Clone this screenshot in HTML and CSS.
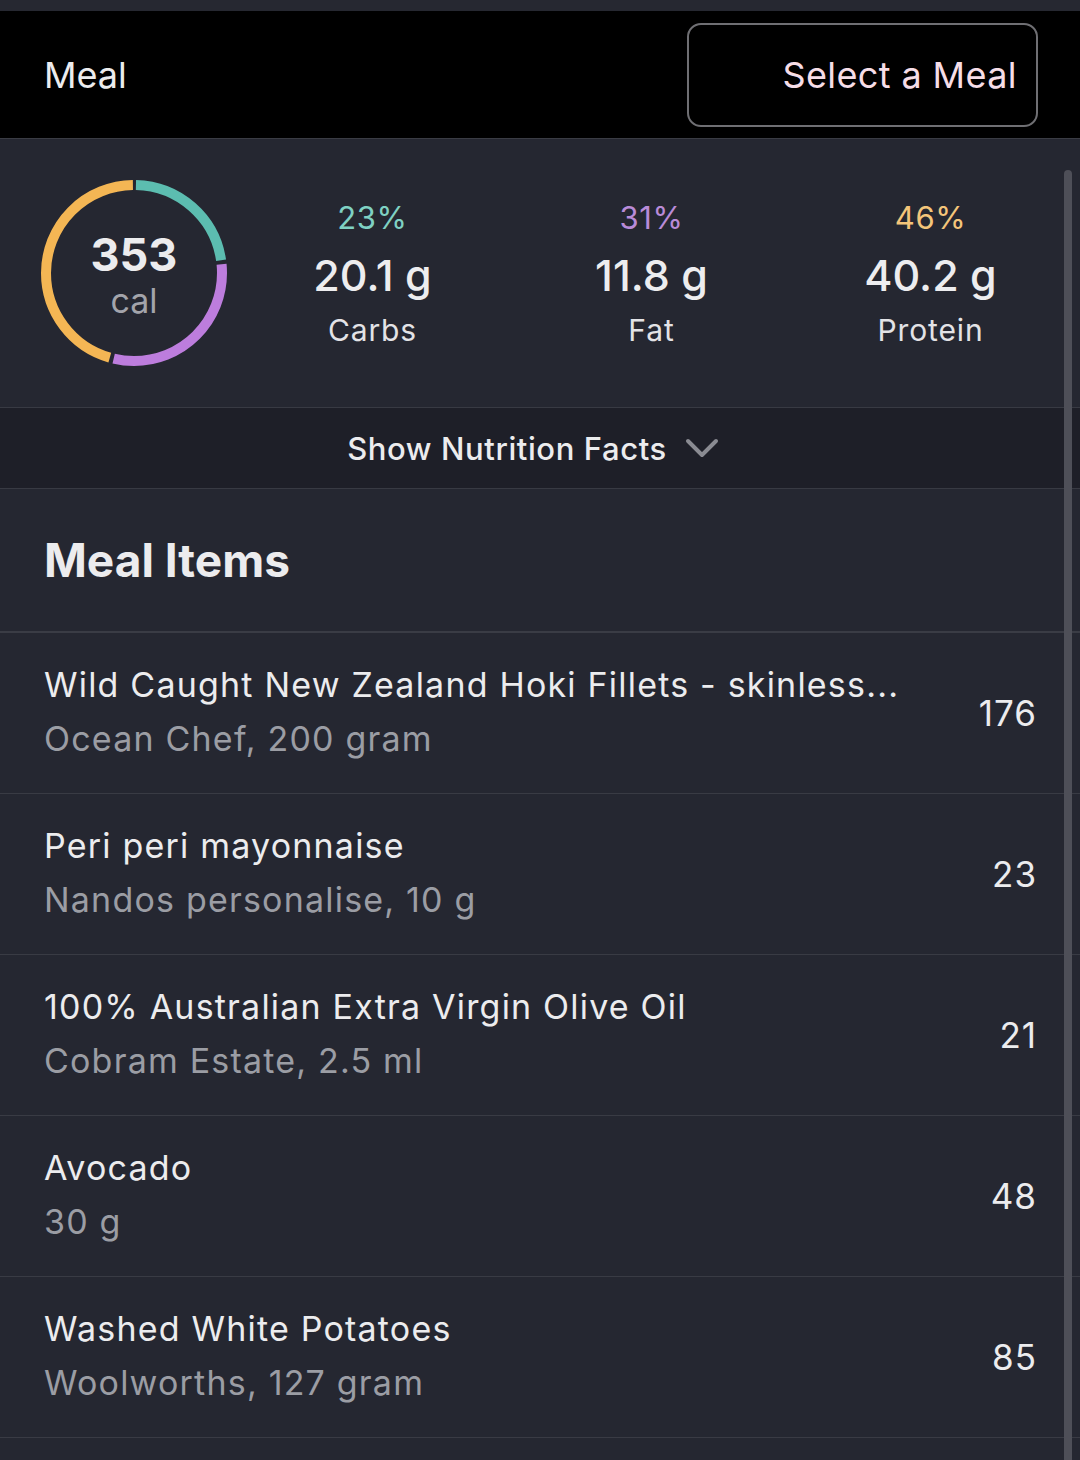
FILE: index.html
```html
<!DOCTYPE html>
<html>
<head>
<meta charset="utf-8">
<link rel="stylesheet" href="styles.css">
</head>
<body>
<div class="page">
  <div class="topstrip"></div>
  <header class="header">
    <div class="header-title">Meal</div>
    <button class="select-btn">Select a Meal</button>
  </header>
  <section class="summary">
    <div class="ring">
      <svg width="190" height="190" viewBox="0 0 190 190">
        <g transform="rotate(-90 95 95)" fill="none" stroke-width="10">
          <circle cx="95" cy="95" r="88" stroke="#5cbdb0" stroke-dasharray="123.2 600" stroke-dashoffset="-2"/>
          <circle cx="95" cy="95" r="88" stroke="#bd7ddd" stroke-dasharray="167.4 600" stroke-dashoffset="-129.2"/>
          <circle cx="95" cy="95" r="88" stroke="#f4b654" stroke-dasharray="250.3 600" stroke-dashoffset="-300.6"/>
        </g>
      </svg>
      <div class="ring-text">
        <div class="ring-num">353</div>
        <div class="ring-unit">cal</div>
      </div>
    </div>
    <div class="macros">
      <div class="macro">
        <div class="pct pct-carbs">23%</div>
        <div class="amount">20.1 g</div>
        <div class="label">Carbs</div>
      </div>
      <div class="macro">
        <div class="pct pct-fat">31%</div>
        <div class="amount">11.8 g</div>
        <div class="label">Fat</div>
      </div>
      <div class="macro">
        <div class="pct pct-protein">46%</div>
        <div class="amount">40.2 g</div>
        <div class="label">Protein</div>
      </div>
    </div>
  </section>
  <div class="facts-bar">
    <span class="facts-text">Show Nutrition Facts</span>
    <svg class="chevron" width="34" height="24" viewBox="0 0 34 24">
      <path d="M3 4 L17 18 L31 4" fill="none" stroke="#8a8b92" stroke-width="4" stroke-linecap="round" stroke-linejoin="round"/>
    </svg>
  </div>
  <div class="items-head">Meal Items</div>
  <ul class="items">
    <li class="item">
      <div class="item-text">
        <div class="item-name">Wild Caught New Zealand Hoki Fillets - skinless...</div>
        <div class="item-sub">Ocean Chef, 200 gram</div>
      </div>
      <div class="item-cal">176</div>
    </li>
    <li class="item">
      <div class="item-text">
        <div class="item-name">Peri peri mayonnaise</div>
        <div class="item-sub">Nandos personalise, 10 g</div>
      </div>
      <div class="item-cal">23</div>
    </li>
    <li class="item">
      <div class="item-text">
        <div class="item-name">100% Australian Extra Virgin Olive Oil</div>
        <div class="item-sub">Cobram Estate, 2.5 ml</div>
      </div>
      <div class="item-cal">21</div>
    </li>
    <li class="item">
      <div class="item-text">
        <div class="item-name">Avocado</div>
        <div class="item-sub">30 g</div>
      </div>
      <div class="item-cal">48</div>
    </li>
    <li class="item">
      <div class="item-text">
        <div class="item-name">Washed White Potatoes</div>
        <div class="item-sub">Woolworths, 127 gram</div>
      </div>
      <div class="item-cal">85</div>
    </li>
    <li class="item item-empty"></li>
  </ul>
  <div class="scrollbar"></div>
</div>
</body>
</html>
```
FILE: styles.css
```css
html, body {
  margin: 0;
  padding: 0;
  background: #252731;
}
body {
  font-family: Inter, "Noto Sans", "Liberation Sans", sans-serif;
  color: #ececee;
}
.page {
  position: relative;
  width: 1080px;
  height: 1460px;
  overflow: hidden;
  background: #252731;
}
.topstrip {
  height: 11px;
  background: #262831;
}
.header {
  height: 127px;
  background: #000;
  border-bottom: 1px solid #3a3c44;
  display: flex;
  align-items: center;
  justify-content: space-between;
  padding: 0 42px 0 44px;
}
.header-title {
  font-size: 36px;
  color: #ececee;
}
.select-btn {
  width: 351px;
  height: 104px;
  background: #000;
  border: 2px solid #6f6f73;
  border-radius: 14px;
  color: #f6dde7;
  font-family: inherit;
  font-size: 36px;
  text-align: right;
  padding: 0 19px 0 0;
  letter-spacing: 0.4px;
}
.summary {
  height: 268px;
  display: flex;
  align-items: center;
  padding-left: 39px;
  border-bottom: 1px solid #383a43;
}
.ring {
  position: relative;
  width: 190px;
  height: 190px;
}
.ring svg {
  display: block;
}
.ring-text {
  position: absolute;
  inset: 0;
  display: flex;
  flex-direction: column;
  align-items: center;
  justify-content: center;
  padding-top: 6px;
}
.ring-num {
  font-size: 45px;
  font-weight: 700;
  line-height: 50px;
  color: #ececee;
}
.ring-unit {
  font-size: 34px;
  line-height: 42px;
  color: #a3a4ab;
}
.macros {
  flex: 1;
  display: grid;
  grid-template-columns: 279px 279px 279px;
  padding-left: 4px;
}
.macro {
  display: flex;
  flex-direction: column;
  align-items: center;
}
.pct {
  font-size: 31px;
  line-height: 40px;
  letter-spacing: 0.6px;
}
.pct-carbs { color: #7fd1c3; }
.pct-fat { color: #b98bd8; }
.pct-protein { color: #f4c57a; }
.amount {
  font-size: 43px;
  line-height: 74px;
  font-weight: 500;
  color: #ededef;
}
.label {
  font-size: 30px;
  line-height: 36px;
  letter-spacing: 0.9px;
  color: #e3e3e6;
}
.facts-bar {
  height: 80px;
  background: #1e1f28;
  border-bottom: 1px solid #383a43;
  display: flex;
  align-items: center;
  justify-content: center;
  gap: 18px;
  padding-right: 14px;
}
.facts-text {
  font-size: 31px;
  font-weight: 500;
  letter-spacing: 0.6px;
  color: #ececee;
}
.chevron {
  display: block;
  margin-top: 2px;
}
.items-head {
  height: 144px;
  display: flex;
  align-items: center;
  padding-left: 44px;
  font-size: 46px;
  font-weight: 700;
  color: #ececee;
  border-bottom: 2px solid #3a3c45;
  box-sizing: border-box;
}
.items {
  list-style: none;
  margin: 0;
  padding: 0;
}
.item {
  display: flex;
  align-items: center;
  gap: 60px;
  height: 161px;
  box-sizing: border-box;
  padding: 0 44px;
  border-bottom: 1px solid #393b44;
}
.item-text {
  flex: 1;
  min-width: 0;
  margin-top: -3px;
}
.item-name, .item-sub {
  font-size: 34px;
  line-height: 54px;
  letter-spacing: 1.2px;
  white-space: nowrap;
  overflow: hidden;
  text-overflow: ellipsis;
}
.item-name {
  color: #ececee;
}
.item-sub {
  color: #9b9da4;
}
.item-cal {
  font-size: 35px;
  letter-spacing: 1px;
  margin-right: -1px;
  color: #ececee;
  text-align: right;
}
.scrollbar {
  position: absolute;
  left: 1064px;
  top: 170px;
  width: 8px;
  height: 1320px;
  border-radius: 4px;
  background: #4e4f58;
}
```
